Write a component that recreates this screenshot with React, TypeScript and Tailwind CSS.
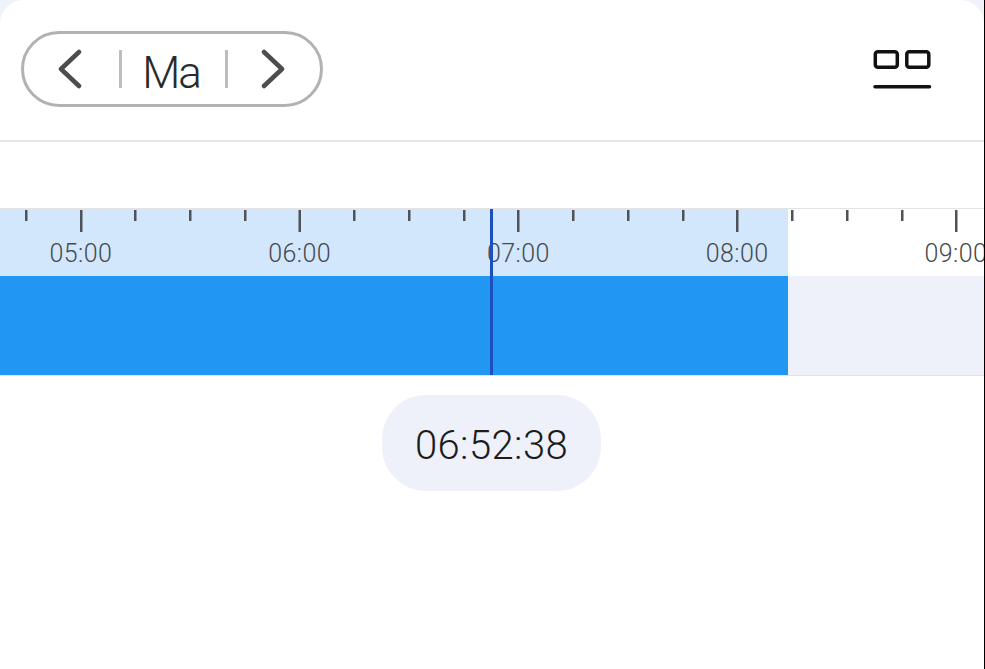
const HOURS = ["05:00", "06:00", "07:00", "08:00", "09:00"];
const MINOR = [26, 135, 190, 245, 354, 409, 464, 573, 628, 683, 792, 847, 902];
const MAJOR = [81, 299.5, 518, 737, 956];

export default function App() {
  return (
    <div className="w-[985px] h-[669px] bg-black overflow-hidden" style={{ fontFamily: "Roboto, sans-serif" }}>
      <div className="w-[984px] h-[669px] bg-[#f1f3fb]">
        <div className="w-full h-full bg-white rounded-t-[24px] flex flex-col overflow-hidden">
          <header className="h-[142px] shrink-0 border-b-2 border-[#e6e6e6] flex items-start justify-between pt-[31px] pl-[21px] pr-[52px]">
            <div className="w-[302px] h-[76px] rounded-full border-[3px] border-[#b2b2b2] flex items-center text-[#2a2a2a]">
              <div className="w-[95px] flex justify-center pr-[4px]">
                <svg width="28" height="40" viewBox="0 0 28 40" fill="none" stroke="#4d4d4d" strokeWidth="4.5" strokeLinecap="round" strokeLinejoin="round">
                  <path d="M23 3 5 20l18 17" />
                </svg>
              </div>
              <div className="w-[3px] h-[38px] bg-[#bdbdbd]" />
              <div className="w-[103px] pt-[7px] pr-[5px] text-center text-[44px] font-light tracking-[-2px] leading-none">Ma</div>
              <div className="w-[3px] h-[38px] bg-[#bdbdbd]" />
              <div className="flex-1 flex justify-center pr-[2px]">
                <svg width="28" height="40" viewBox="0 0 28 40" fill="none" stroke="#4d4d4d" strokeWidth="4.5" strokeLinecap="round" strokeLinejoin="round">
                  <path d="m5 3 18 17L5 37" />
                </svg>
              </div>
            </div>
            <svg className="mt-[19px]" width="60" height="40" viewBox="0 0 60 40" fill="none" stroke="#111" strokeWidth="3.5" strokeLinecap="round">
              <rect x="3.3" y="1.8" width="22" height="15.4" rx="2.5" />
              <rect x="34.8" y="1.8" width="22" height="15.4" rx="2.5" />
              <path d="M3 36.8h54.5" />
            </svg>
          </header>

          <section className="mt-[66px] h-[168px] shrink-0 border-y border-[#e3e3e3] relative overflow-hidden">
            <div className="absolute left-0 top-0 w-[788px] h-[67px] bg-[#d2e7fb]" />
            <svg className="absolute left-0 top-0" width="985" height="24">
              {MINOR.map((x) => (
                <rect key={x} x={x - 1} y={1} width={2.5} height={11} fill="#4f5358" />
              ))}
              {MAJOR.map((x) => (
                <rect key={x} x={x - 1} y={1} width={2.5} height={22} fill="#4f5358" />
              ))}
            </svg>
            <div className="relative h-[67px] flex ml-[-28.5px] pt-[29px] text-[25px] font-light tracking-[0.4px] leading-[32px] text-[#45494e]">
              {HOURS.map((h) => (
                <div key={h} className="w-[218.75px] shrink-0 text-center">
                  {h}
                </div>
              ))}
            </div>
            <div className="h-[99px] bg-[#eef1f9]">
              <div className="w-[788px] h-full bg-[#2196f3]" />
            </div>
            <div className="absolute left-[490px] top-0 w-[3px] h-full bg-[#1c4fc0]" />
          </section>

          <div className="flex justify-center mt-[19px] pr-[1px]">
            <div className="w-[219px] h-[96px] pt-[6px] rounded-[44px] bg-[#eef1f9] flex items-center justify-center text-[40px] font-light tracking-[0.4px] text-[#1c1c1c]">
              06:52:38
            </div>
          </div>
        </div>
      </div>
    </div>
  );
}
